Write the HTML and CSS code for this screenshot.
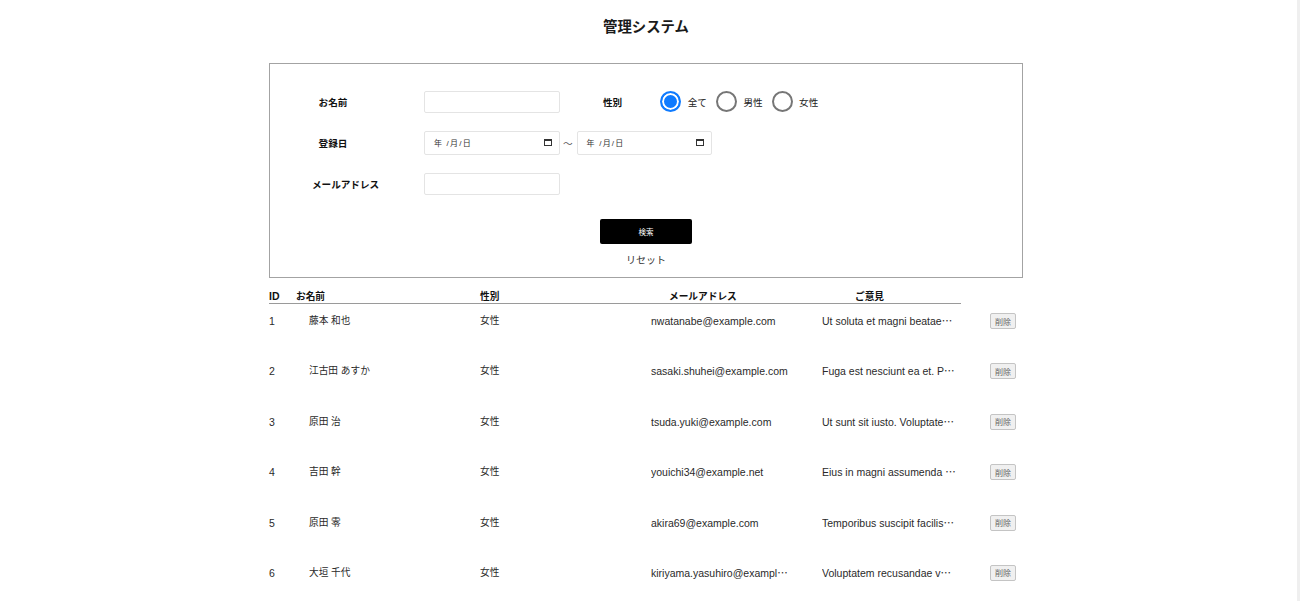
FILE: index.html
```html
<!DOCTYPE html>
<html lang="ja">
<head>
<meta charset="utf-8">
<title>管理システム</title>
<link rel="stylesheet" href="styles.css">
</head>
<body>
<div class="page">
  <h1 class="title">管理システム</h1>

  <form class="search-box">
    <div class="fields">
      <div class="form-row">
        <label class="label">お名前</label>
        <input class="text-input" type="text">
        <span class="label gender-label">性別</span>
        <div class="radios">
          <label class="radio-item"><input class="radio" type="radio" name="gender" checked><span>全て</span></label>
          <label class="radio-item"><input class="radio" type="radio" name="gender"><span>男性</span></label>
          <label class="radio-item"><input class="radio" type="radio" name="gender"><span>女性</span></label>
        </div>
      </div>
      <div class="form-row">
        <label class="label">登録日</label>
        <div class="date-input">
          <span class="date-text">年 /月/日</span>
          <svg class="cal" width="8" height="7" viewBox="0 0 8 7"><rect x="0.5" y="0.5" width="7" height="6" fill="none" stroke="#333" stroke-width="1"/><rect x="0" y="0" width="8" height="2" fill="#333"/></svg>
        </div>
        <span class="tilde">〜</span>
        <div class="date-input date-second">
          <span class="date-text">年 /月/日</span>
          <svg class="cal" width="8" height="7" viewBox="0 0 8 7"><rect x="0.5" y="0.5" width="7" height="6" fill="none" stroke="#333" stroke-width="1"/><rect x="0" y="0" width="8" height="2" fill="#333"/></svg>
        </div>
      </div>
      <div class="form-row">
        <label class="label">メールアドレス</label>
        <input class="text-input" type="text">
      </div>
    </div>
    <div class="actions">
      <button class="search-btn" type="button">検索</button>
      <a class="reset">リセット</a>
    </div>
  </form>

  <div class="table">
    <div class="thead">
      <span>ID</span>
      <span class="jp">お名前</span>
      <span class="jp">性別</span>
      <span class="jp">メールアドレス</span>
      <span class="jp">ご意見</span>
    </div>
    <div class="row">
      <span>1</span><span class="jp">藤本 和也</span><span class="jp">女性</span>
      <span class="clip email"><span class="clip-text">nwatanabe@example.com</span></span>
      <span class="clip"><span class="clip-text">Ut soluta et magni beataeque voluptas eos.</span></span>
      <button class="del" type="button">削除</button>
    </div>
    <div class="row">
      <span>2</span><span class="jp">江古田 あすか</span><span class="jp">女性</span>
      <span class="clip email"><span class="clip-text">sasaki.shuhei@example.com</span></span>
      <span class="clip"><span class="clip-text">Fuga est nesciunt ea et. Praesentium quia.</span></span>
      <button class="del" type="button">削除</button>
    </div>
    <div class="row">
      <span>3</span><span class="jp">原田 治</span><span class="jp">女性</span>
      <span class="clip email"><span class="clip-text">tsuda.yuki@example.com</span></span>
      <span class="clip"><span class="clip-text">Ut sunt sit iusto. Voluptatem dolores.</span></span>
      <button class="del" type="button">削除</button>
    </div>
    <div class="row">
      <span>4</span><span class="jp">吉田 幹</span><span class="jp">女性</span>
      <span class="clip email"><span class="clip-text">youichi34@example.net</span></span>
      <span class="clip"><span class="clip-text">Eius in magni assumenda vel quia.</span></span>
      <button class="del" type="button">削除</button>
    </div>
    <div class="row">
      <span>5</span><span class="jp">原田 零</span><span class="jp">女性</span>
      <span class="clip email"><span class="clip-text">akira69@example.com</span></span>
      <span class="clip"><span class="clip-text">Temporibus suscipit facilis ut sint.</span></span>
      <button class="del" type="button">削除</button>
    </div>
    <div class="row">
      <span>6</span><span class="jp">大垣 千代</span><span class="jp">女性</span>
      <span class="clip email"><span class="clip-text">kiriyama.yasuhiro@example.com</span></span>
      <span class="clip"><span class="clip-text">Voluptatem recusandae vel sed.</span></span>
      <button class="del" type="button">削除</button>
    </div>
  </div>
</div>
</body>
</html>
```
FILE: styles.css
```css
html {
  background: linear-gradient(to right, #fff 1297px, #efefef 1297px, #efefef 1300px, #fff 1300px);
}
body {
  margin: 0;
  font-family: "Liberation Sans", "Noto Sans CJK JP", sans-serif;
  color: #222;
  overflow: hidden;
}
.page {
  width: 1292px;
}
.title {
  margin: 0;
  padding-top: 18px;
  font-size: 14.4px;
  line-height: 18px;
  text-align: center;
  font-weight: bold;
  color: #1a1a1a;
}
.search-box {
  box-sizing: border-box;
  width: 754px;
  margin: 27px auto 0;
  border: 1px solid #a3a3a3;
  padding: 17px 0 10px;
}
.form-row {
  display: flex;
  align-items: center;
  height: 41px;
}
.label {
  width: 42px;
  margin-left: 42px;
  text-align: center;
  white-space: nowrap;
  font-weight: bold;
  font-size: 9.6px;
  color: #111;
  flex-shrink: 0;
}
.text-input {
  box-sizing: border-box;
  width: 136px;
  height: 22px;
  margin: 0 0 0 70px;
  border: 1px solid #e4e4e4;
  border-radius: 2px;
  padding: 0 6px;
  outline: none;
}
.gender-label {
  width: auto;
  margin-left: 43px;
}
.radios {
  display: flex;
  align-items: center;
  margin-left: 38px;
  gap: 9px;
}
.radio-item {
  display: flex;
  align-items: center;
  gap: 6.5px;
  font-size: 9.6px;
  color: #222;
}
.radio {
  appearance: none;
  -webkit-appearance: none;
  box-sizing: border-box;
  width: 21px;
  height: 21px;
  margin: 0;
  border-radius: 50%;
  border: 2px solid #767676;
  background: #fff;
}
.radio:checked {
  border-color: #0f7bff;
  background: #0f7bff;
  box-shadow: inset 0 0 0 2px #fff;
}
.date-input {
  box-sizing: border-box;
  width: 136px;
  height: 24px;
  margin-left: 70px;
  border: 1px solid #e4e4e4;
  border-radius: 2px;
  display: flex;
  align-items: center;
  justify-content: space-between;
  padding: 0 7px 0 9px;
  font-size: 8px;
  color: #333;
}
.date-text {
  letter-spacing: 1.2px;
}
.date-second {
  width: 135px;
  margin-left: 4px;
}
.cal {
  display: block;
}
.tilde {
  margin-left: 3px;
  font-size: 9.6px;
  color: #555;
}
.actions {
  display: flex;
  flex-direction: column;
  align-items: center;
  margin-top: 15px;
}
.search-btn {
  width: 92px;
  height: 25px;
  border: none;
  border-radius: 2px;
  background: #000;
  color: #fff;
  font-family: inherit;
  font-size: 7.5px;
  padding: 0;
}
.reset {
  margin-top: 11px;
  font-size: 10px;
  line-height: 12px;
  color: #333;
}
.table {
  margin-left: 269px;
  font-size: 10.5px;
}
.jp {
  font-size: 9.7px;
}
.thead {
  display: grid;
  grid-template-columns: 27px 184px 189px 186px 1fr;
  width: 692px;
  height: 13px;
  margin-top: 12px;
  line-height: 13px;
  font-weight: bold;
  color: #111;
  border-bottom: 1px solid #9a9a9a;
}
.row {
  display: grid;
  grid-template-columns: 40px 171px 171px 171px 168px auto;
  align-items: center;
  align-content: start;
  box-sizing: border-box;
  height: 50.4px;
  padding-top: 9px;
  line-height: 16px;
  color: #2a2a2a;
}
.clip {
  width: 134px;
  overflow: hidden;
  white-space: nowrap;
  text-overflow: ellipsis;
  font-family: "Noto Sans CJK JP", sans-serif;
}
.clip.email {
  width: 140px;
}
.clip-text {
  font-family: "Liberation Sans", "Noto Sans CJK JP", sans-serif;
}
.del {
  box-sizing: border-box;
  width: 26px;
  height: 16px;
  padding: 0;
  border: 1px solid #c4c4c4;
  border-radius: 2px;
  background: #f0f0f0;
  color: #666;
  font-family: inherit;
  font-size: 8px;
}
```
